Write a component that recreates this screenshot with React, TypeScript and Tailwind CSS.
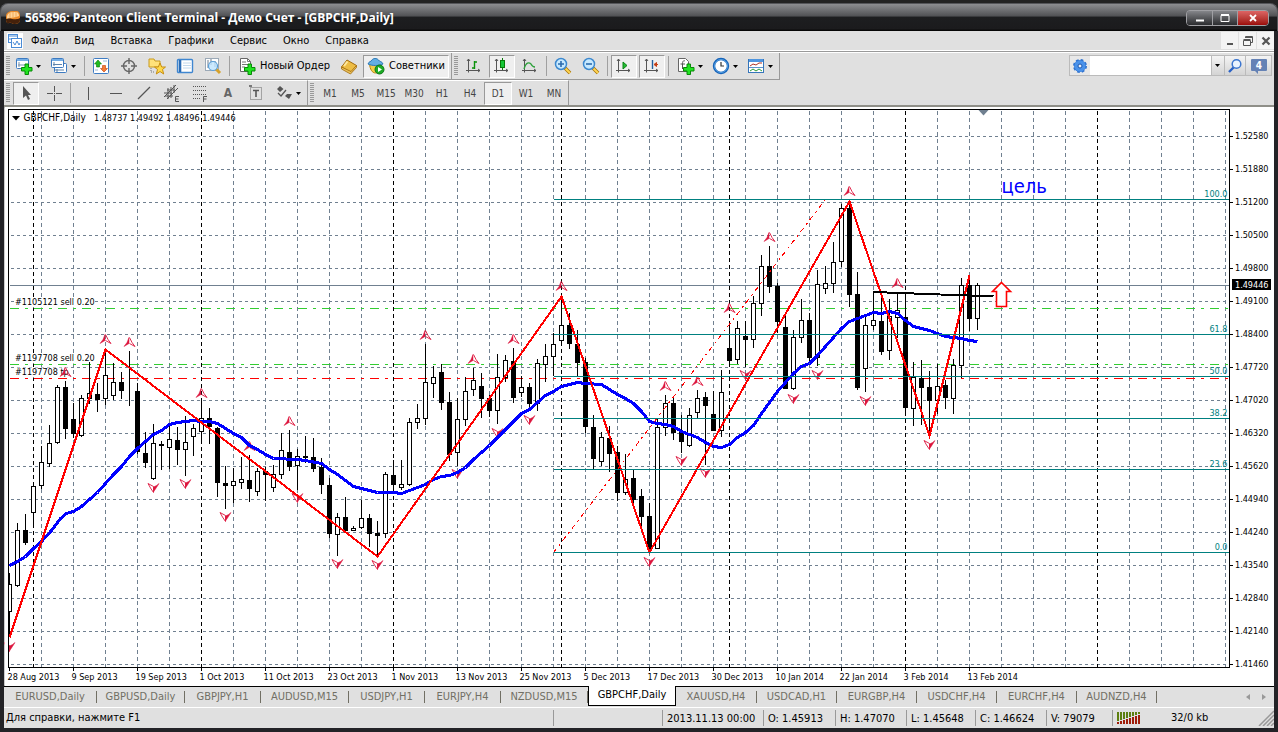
import React, { useState } from "react";

type Candle = [number, number, number, number, number];

// high, body top, body bottom, low, filled
const CANDLES: Candle[] = [
  [573, 584, 612, 636, 0], [523, 530, 586, 587, 0], [514, 530, 543, 545, 1],
  [484, 486, 513, 524, 0], [446, 462, 486, 489, 0], [425, 443, 464, 467, 0],
  [385, 387, 443, 444, 0], [381, 387, 429, 439, 1], [403, 419, 434, 438, 1],
  [395, 398, 436, 437, 0], [362, 393, 399, 404, 0], [383, 394, 400, 412, 1],
  [349, 375, 399, 405, 0], [363, 382, 396, 400, 0], [372, 382, 391, 399, 1],
  [351, 391, 392, 406, 1], [383, 391, 452, 454, 1], [432, 453, 463, 468, 1],
  [424, 443, 479, 480, 0], [441, 444, 446, 470, 1], [424, 439, 448, 469, 0],
  [427, 440, 450, 465, 1], [416, 442, 450, 476, 0], [424, 428, 437, 456, 0],
  [402, 418, 432, 443, 0], [408, 418, 427, 444, 1], [427, 428, 483, 497, 1],
  [466, 483, 486, 509, 1], [468, 481, 486, 503, 0], [457, 479, 483, 489, 0],
  [455, 480, 489, 502, 1], [468, 471, 492, 496, 0], [467, 471, 475, 501, 1],
  [465, 474, 488, 492, 0], [433, 450, 475, 479, 0], [430, 452, 467, 471, 1],
  [449, 456, 466, 490, 0], [436, 456, 458, 463, 1], [438, 457, 469, 472, 1],
  [458, 467, 485, 494, 1], [478, 485, 534, 538, 1], [513, 517, 535, 556, 0],
  [497, 517, 531, 531, 1], [526, 528, 531, 531, 0], [500, 518, 528, 529, 0],
  [514, 518, 534, 547, 1], [521, 533, 536, 555, 1], [472, 474, 534, 538, 0],
  [460, 475, 485, 489, 1], [460, 484, 488, 490, 0], [418, 422, 485, 486, 0],
  [404, 418, 423, 429, 0], [344, 382, 419, 425, 0], [366, 377, 384, 398, 0],
  [364, 372, 403, 410, 1], [392, 402, 455, 461, 1], [398, 419, 453, 466, 0],
  [377, 391, 420, 426, 0], [368, 380, 390, 396, 0], [373, 386, 399, 418, 1],
  [395, 398, 411, 417, 1], [354, 377, 411, 424, 0], [355, 360, 378, 382, 0],
  [348, 361, 398, 403, 1], [376, 387, 393, 397, 0], [383, 387, 404, 409, 1],
  [359, 363, 404, 411, 0], [344, 356, 365, 382, 0], [333, 344, 357, 376, 0],
  [298, 325, 341, 344, 0], [313, 325, 344, 349, 1], [330, 344, 363, 376, 1],
  [358, 362, 427, 433, 1], [415, 427, 459, 469, 1], [432, 437, 462, 466, 0],
  [426, 438, 454, 472, 1], [446, 452, 493, 501, 1], [454, 479, 493, 495, 0],
  [469, 478, 500, 504, 1], [489, 496, 517, 527, 1], [503, 516, 549, 553, 1],
  [419, 427, 549, 549, 0], [395, 403, 428, 436, 0], [397, 403, 433, 440, 1],
  [415, 431, 442, 453, 1], [408, 415, 446, 447, 0], [390, 398, 413, 418, 0],
  [392, 397, 406, 465, 1], [391, 414, 431, 431, 1], [370, 392, 431, 437, 0],
  [325, 348, 361, 364, 1], [321, 328, 360, 364, 0], [321, 336, 340, 367, 1],
  [296, 303, 340, 348, 0], [255, 266, 304, 316, 0], [246, 266, 287, 293, 1],
  [283, 286, 322, 333, 1], [315, 327, 389, 389, 1], [330, 337, 389, 390, 0],
  [299, 320, 338, 343, 0], [313, 320, 358, 362, 1], [270, 284, 358, 366, 0],
  [266, 283, 289, 294, 0], [242, 262, 284, 293, 0], [204, 208, 262, 267, 0],
  [203, 208, 295, 307, 1], [272, 294, 388, 390, 1], [315, 325, 369, 392, 0],
  [291, 320, 326, 330, 0], [295, 321, 352, 355, 1], [299, 316, 351, 360, 0],
  [292, 310, 318, 338, 0], [295, 317, 408, 413, 1], [362, 377, 409, 426, 0],
  [360, 378, 388, 425, 1], [371, 387, 401, 435, 1], [364, 386, 401, 414, 0],
  [380, 385, 398, 409, 1], [359, 365, 399, 414, 0], [278, 285, 366, 378, 0],
  [280, 285, 319, 331, 1], [283, 285, 319, 330, 0],
];

const AVERAGE =
  "9,565 17,561 25,556 33,548 41,541 51,530 60,518 66,513 73,511 81,506 89,499 97,492 105,483 113,474 121,466 129,456 137,448 145,441 153,434 161,430 169,424 177,422 185,421 193,420 201,421 209,421 217,423 225,428 233,433 241,437 249,445 257,449 265,454 273,458 297,459 305,460 321,463 329,469 337,474 345,480 353,486 361,488 369,490 377,492 393,492 401,493 409,490 417,487 425,484 433,479 441,476 449,475 457,472 465,467 473,459 481,452 489,445 497,437 505,429 513,421 521,413 529,409 537,402 545,395 553,391 561,386 569,384 577,382 585,383 601,384 609,389 617,394 625,398 633,403 641,411 649,421 657,423 665,424 673,426 681,431 689,434 697,437 705,442 713,446 721,447 729,444 737,437 745,432 753,425 761,413 769,402 777,391 785,382 793,373 801,366 809,363 817,355 825,346 833,337 841,328 849,321 857,318 865,315 873,312 881,313 889,311 897,313 905,320 913,326 921,328 929,330 937,333 945,336 953,337 961,338 969,340 977,341";

const ZIGZAG = "9,637 105,349 377,556 561,296 649,552 849,201 929,435 969,275";

const FRACTALS_UP = [
  [65, 367], [105, 334], [129, 337], [201, 388], [249, 441], [289, 416],
  [425, 330], [473, 354], [513, 334], [561, 281], [665, 381], [697, 376],
  [729, 303], [769, 232], [849, 186], [897, 278],
];

const FRACTALS_DOWN = [
  [9, 642], [153, 483], [185, 479], [225, 512], [297, 493], [337, 559],
  [377, 560], [457, 469], [497, 428], [529, 415], [649, 557], [681, 456],
  [705, 468], [745, 370], [793, 394], [817, 370], [865, 396], [929, 440],
];

const PRICES = [
  "1.52580", "1.51880", "1.51200", "1.50500", "1.49800", "1.49100", "1.48400",
  "1.47720", "1.47020", "1.46320", "1.45620", "1.44940", "1.44240", "1.43540",
  "1.42840", "1.42140", "1.41460",
];

const DATES = [
  "28 Aug 2013", "9 Sep 2013", "19 Sep 2013", "1 Oct 2013", "11 Oct 2013",
  "23 Oct 2013", "1 Nov 2013", "13 Nov 2013", "25 Nov 2013", "5 Dec 2013",
  "17 Dec 2013", "30 Dec 2013", "10 Jan 2014", "22 Jan 2014", "3 Feb 2014",
  "13 Feb 2014",
];

const MONTHS = [33, 201, 393, 561, 729, 905, 1097];

const FIBO = [
  { y: 199, label: "100.0" },
  { y: 334, label: "61.8" },
  { y: 376, label: "50.0" },
  { y: 418, label: "38.2" },
  { y: 469, label: "23.6" },
  { y: 552, label: "0.0" },
];

const ORDERS = [
  { y: 308, label: "#1105121 sell 0.20", color: "#32cd32", box: 79 },
  { y: 364, label: "#1197708 sell 0.20", color: "#32cd32", box: 79 },
  { y: 378, label: "#1197708 tp", color: "#ff0000", box: 54 },
];

const Chart: React.FC = () => (
  <svg
    className="block h-full w-full font-['DejaVu_Sans_Condensed','Noto_Sans',sans-serif] text-[9px]"
    role="img"
    aria-label="GBPCHF,Daily"
  >
    <g transform="translate(-3.5 -106.5)">
      <g shapeRendering="crispEdges" fill="none">
        {Array.from({ length: 38 }, (_, i) => (
          <path key={i} d={`M${41 + i * 32} 110V667`} stroke="#708090" strokeDasharray="4 3" />
        ))}
        {PRICES.map((p, i) => (
          <path key={p} d={`M10 ${136 + i * 33}H1229`} stroke="#708090" strokeDasharray="3 3" />
        ))}
        {MONTHS.map((x) => (
          <path key={x} d={`M${x} 110V667`} stroke="#000" strokeDasharray="4 3" />
        ))}
        <path d="M9 285H1229" stroke="#708090" />
      </g>

      {ORDERS.map((o) => (
        <g key={o.y}>
          <rect x={15} y={o.y - 11} width={o.box} height={10} fill="#fff" />
          <path
            d={`M9 ${o.y}H1229`}
            stroke={o.color}
            strokeDasharray="9 6 3 6"
            shapeRendering="crispEdges"
          />
          <text x={14.500} y={o.y - 3.500}>{o.label}</text>
        </g>
      ))}

      <g stroke="#000" shapeRendering="crispEdges">
        {CANDLES.map(([high, top, bottom, low, filled], i) => {
          const x = 9 + i * 8;
          return (
            <g key={i}>
              <path d={`M${x} ${high - 0.5}V${Math.max(low, bottom) - 0.5}`} />
              <rect
                x={x - 2}
                y={top}
                width={4}
                height={Math.max(bottom - top - 1, 0)}
                fill={filled ? "#000" : "#fff"}
              />
            </g>
          );
        })}
      </g>

      <g stroke="#dc143c">
        {FRACTALS_UP.map(([x, y]) => (
          <g key={x} transform={`translate(${x} ${y})`}>
            <path d="M-.5 0L-2.500 5L-5.500 9L-.5 6Z" fill="#dc143c" strokeWidth=".5" />
            <path d="M0 0L2.500 5L5.500 9L0 6" fill="none" strokeWidth=".9" />
          </g>
        ))}
        {FRACTALS_DOWN.map(([x, y]) => (
          <g key={x} transform={`translate(${x} ${y})`}>
            <path d="M-5.500 0L0 3V9L-3 4.500Z" fill="none" strokeWidth=".9" />
            <path d="M5.500 0L3 4L0 8.500V3.500L3 2Z" fill="#dc143c" strokeWidth=".5" />
          </g>
        ))}
      </g>

      <g fill="none" shapeRendering="crispEdges">
        <polyline points={AVERAGE} stroke="#0000ff" strokeWidth="3" />
        <polyline points={ZIGZAG} stroke="#ff0000" strokeWidth="2" />
        <path d="M553 552L825 199" stroke="#ff0000" strokeDasharray="5 4 2 4" />
        {FIBO.map((f) => (
          <path key={f.y} d={`M553 ${f.y}H1229`} stroke="#008080" />
        ))}
        <path d="M873 291.500L993 296" stroke="#000" strokeWidth="2" />
      </g>
      <g fill="#008080" textAnchor="end">
        {FIBO.map((f) => (
          <text key={f.y} x={1227} y={f.y - 2.500}>{f.label}</text>
        ))}
      </g>

      <path
        d="M1001 282L1010 291H1006V306H996V291H992Z"
        fill="#fff"
        stroke="#ff0000"
        strokeWidth="1.600"
      />
      <text x={1001} y={192} fill="#0000ff" className="text-[20px]">цель</text>

      {/* axes */}
      <rect x={4} y={107} width={4} height={578} fill="#fff" />
      <g stroke="#000" fill="none" shapeRendering="crispEdges">
        <path d="M8 109H1229V667H8Z" />
        {PRICES.map((p, i) => (
          <path key={p} d={`M1229 ${136 + i * 33}h3`} />
        ))}
        {DATES.map((d, i) => (
          <path key={d} d={`M${9 + i * 64} 667v3`} />
        ))}
      </g>
      <path d="M978 109.500H988L983 115Z" fill="#708090" />
      {PRICES.map((p, i) => (
        <text key={p} x={1234.500} y={138.500 + i * 33}>{p}</text>
      ))}
      <rect x={1231.5} y={278.5} width={39} height={11} fill="#000" />
      <text x={1234.500} y={287.500} fill="#fff">1.49446</text>
      {DATES.map((d, i) => (
        <text key={d} x={7 + i * 64} y={679.500}>{d}</text>
      ))}
      <path d="M11.500 115.500H19.500L15.500 120Z" />
      <text x={23} y={120.500} className="text-[10px]">GBPCHF,Daily</text>
      <text x={93.500} y={120.500}>1.48737 1.49492 1.48496 1.49446</text>
    </g>
  </svg>
);

const Icon: React.FC<{ children: React.ReactNode }> = ({ children }) => (
  <svg width="18" height="18" viewBox="0 0 18 18" fill="none" className="shrink-0" aria-hidden="true">
    {children}
  </svg>
);

const Plus: React.FC = () => (
  <path d="M10 7H13.500V10.500H17V14H13.500V17.500H10V14H6.500V10.500H10Z" fill="#21e321" stroke="#078a07" />
);

const Axes: React.FC = () => (
  <path d="M3.500 2V15.500M1 13.500H15M2 4L3.500 2L5 4M13 12L15 13.500L13 15" stroke="#555" />
);

const NewChartIcon = () => (
  <Icon>
    <rect x="1.500" y="1.500" width="12" height="10" rx="1" fill="#fff" stroke="#3d7ac0" />
    <path d="M2 3H13" stroke="#75aee6" strokeWidth="2" />
    <path d="M4 5V10M3 8H11" stroke="#7891aa" />
    <Plus />
  </Icon>
);

const ProfilesIcon = () => (
  <Icon>
    <rect x="4.500" y="6.500" width="12" height="9" rx="1" fill="#fff" stroke="#3d7ac0" />
    <rect x="1.500" y="1.500" width="12" height="9" rx="1" fill="#fff" stroke="#3d7ac0" />
    <path d="M2 3H13" stroke="#75aee6" strokeWidth="2" />
    <path d="M4 5V9M3 7.500H12M5 13H14M7 12V15" stroke="#5f83aa" />
  </Icon>
);

const MarketWatchIcon = () => (
  <Icon>
    <rect x="1.500" y="1.500" width="15" height="15" rx="1" fill="#fff" stroke="#3f7dc4" />
    <path d="M6 3L9.500 7H7.500V10H4.500V7H2.500Z" fill="#20bc20" stroke="#087b08" strokeWidth=".6" />
    <path d="M12 15L8.500 11.500H10.500V8.500H13.500V11.500H15.500Z" fill="#f57b35" stroke="#bf3e08" strokeWidth=".6" />
    <path d="M11 4H15M3 13H6" stroke="#9bb9da" />
  </Icon>
);

const TargetIcon = () => (
  <Icon>
    <circle cx="9" cy="9" r="5.500" stroke="#666" strokeWidth="1.400" />
    <path d="M9 1V7M9 11V17M1 9H7M11 9H17" stroke="#666" strokeWidth="1.400" />
  </Icon>
);

const NavigatorIcon = () => (
  <Icon>
    <path d="M1 2H6L7 4H12V10H1Z" fill="#ffe27a" stroke="#c99a1d" />
    <path d="M3 11V15H6" stroke="#777" strokeDasharray="1 1" />
    <path d="M12 6L13.700 10H17.500L14.500 12.500L15.700 17L12 14.500L8.300 17L9.500 12.500L6.500 10H10.300Z" fill="#ffd94a" stroke="#c78e13" />
  </Icon>
);

const TerminalIcon = () => (
  <Icon>
    <rect x="1.500" y="2.500" width="15" height="13" rx="1" fill="#fff" stroke="#3f86d0" strokeWidth="1.400" />
    <path d="M4 3V15" stroke="#2b6cb5" strokeWidth="2.600" />
    <path d="M7 6H15M7 8.500H15M7 11H15" stroke="#c2d8ec" />
  </Icon>
);

const TesterIcon = () => (
  <Icon>
    <rect x="1.500" y="1.500" width="13" height="12" fill="#fff" stroke="#9ba9b7" />
    <path d="M4 3V11M7 2V8M11 4V10" stroke="#6c7d8e" />
    <path d="M12 12L16 16" stroke="#d7a22b" strokeWidth="3" />
    <circle cx="9" cy="9" r="4.500" fill="#bfe5ffcc" stroke="#5a9fd8" strokeWidth="1.200" />
  </Icon>
);

const OrderIcon = () => (
  <Icon>
    <path d="M2.500 1.500H9.500L12.500 4.500V14.500H2.500Z" fill="#fff" stroke="#666" />
    <path d="M4 5H8M4 7.500H10M4 10H7M9.500 1.500V4.500H12.500" stroke="#777" />
    <Plus />
  </Icon>
);

const BookIcon = () => (
  <Icon>
    <path d="M1.500 10L7 3L16.500 8.500L11 15.500Z" fill="#edbd45" stroke="#a36b0d" />
    <path d="M1.500 10V12L10.500 17L16.500 10.500V8.500L11 14.500Z" fill="#e8c25c" stroke="#a36b0d" strokeWidth=".8" />
    <path d="M4 9L7.500 4.500" stroke="#ffe79c" strokeWidth="2" />
  </Icon>
);

const AdvisorsIcon = () => (
  <Icon>
    <path d="M2.500 7H14C14 13 12 16 8.500 16S3 12 2.500 7Z" fill="#f4cd48" stroke="#b58513" />
    <path d="M1 7C2 4 4 5 5 3C6 1 10 1 11.500 3C12.500 5 15 4 16 7C12 9 5 9 1 7Z" fill="#63aee3" stroke="#2c78b5" />
    <circle cx="12.500" cy="12.500" r="4.500" fill="#1dab25" stroke="#0b7815" />
    <path d="M11 10L15 12.500L11 15Z" fill="#fff" />
  </Icon>
);

const BarsIcon = () => (
  <Icon><Axes /><path d="M9.500 4V12M7 11H9.500M9.500 5H12" stroke="#0a910a" strokeWidth="1.400" /></Icon>
);

const CandlesIcon = () => (
  <Icon><Axes /><path d="M9.500 1V13" stroke="#087b08" /><rect x="7.500" y="3.500" width="4" height="7" fill="#16c736" stroke="#087b08" /></Icon>
);

const LineIcon = () => (
  <Icon><Axes /><path d="M3 12C5 5 8 5 10 7C11 9 13 10 14 10" stroke="#2ca13a" strokeWidth="1.300" /></Icon>
);

const ZoomIcon: React.FC<{ plus?: boolean }> = ({ plus }) => (
  <Icon>
    <path d="M11 11L16 16" stroke="#a77409" strokeWidth="3.600" />
    <path d="M11.500 11.500L16 16" stroke="#ffd552" strokeWidth="2" />
    <circle cx="7" cy="7" r="5.500" fill="#c7e9ff" stroke="#3d89cf" strokeWidth="1.500" />
    <path d={plus ? "M4 7H10M7 4V10" : "M4 7H10"} stroke="#2d6cae" strokeWidth="1.600" />
  </Icon>
);

const ScrollIcon = () => (
  <Icon><Axes /><path d="M8 5L12 8.500L8 12Z" fill="#22bd33" stroke="#0a8414" /></Icon>
);

const ShiftIcon = () => (
  <Icon><Axes /><path d="M9.500 3V12" stroke="#205f9e" strokeWidth="1.400" /><path d="M15 7.500H12M13.500 5.500L11 7.500L13.500 9.500Z" fill="#c53d15" stroke="#c53d15" /></Icon>
);

const IndicatorsIcon = () => (
  <Icon>
    <path d="M1.500 1.500H8.500L11.500 4.500V14.500H1.500Z" fill="#fff" stroke="#666" />
    <path d="M8 4C6 3 5.500 5 5.500 7V12M3.500 7H8" stroke="#555" />
    <Plus />
  </Icon>
);

const ClockIcon = () => (
  <Icon>
    <circle cx="9" cy="9" r="7" fill="#fff" stroke="#1764ba" strokeWidth="2.400" />
    <circle cx="9" cy="9" r="6.500" stroke="#64adea" strokeWidth=".8" />
    <path d="M9 5V9H12" stroke="#333" strokeWidth="1.200" />
  </Icon>
);

const TemplatesIcon = () => (
  <Icon>
    <rect x="1.500" y="2.500" width="15" height="13" fill="#fff" stroke="#3575ba" />
    <path d="M2 3.500H16" stroke="#4e95df" strokeWidth="3" />
    <path d="M3 9L6 7L9 8L12 6H15" stroke="#ad3426" />
    <path d="M2 10.500H16" stroke="#5c94cb" />
    <path d="M3 14L6 12L9 14L12 12L15 14" stroke="#2b9b3a" />
  </Icon>
);

const glyphs: { label: string; icon: React.ReactNode }[] = [
  { label: "Вертикальная линия", icon: <path d="M9.500 3V16" stroke="#555" /> },
  { label: "Горизонтальная линия", icon: <path d="M3 9.500H15" stroke="#555" /> },
  { label: "Трендовая линия", icon: <path d="M3 15L15 3" stroke="#555" strokeWidth="1.300" /> },
  {
    label: "Канал",
    icon: (
      <>
        <path d="M1 13L13 1M4 15L15 4M1 9L9 9M4 6H12M2 12H10M5 4V15M8 3V14M11 1V9" stroke="#555" />
        <path d="M16 12.500H12.500V17.500H16M12.500 15H15.500" stroke="#555" />
      </>
    ),
  },
  {
    label: "Фибоначчи",
    icon: (
      <>
        <path d="M2 2.500H15M2 6.500H15M2 10.500H15M2 14.500H10" stroke="#555" strokeDasharray="1 1" />
        <path d="M16 12.500H12.500V18M12.500 15H15.500" stroke="#555" />
      </>
    ),
  },
];

const DropArrow = () => (
  <svg width="5" height="3" viewBox="0 0 5 3" className="ml-[3px] shrink-0" aria-hidden="true">
    <path d="M0 0H5L2.500 3Z" />
  </svg>
);

interface ToolProps {
  label: string;
  drop?: boolean;
  pressed?: boolean;
  children: React.ReactNode;
}

const Tool: React.FC<ToolProps> = ({ label, drop, pressed, children }) => {
  if (drop) {
    return (
      <button type="button" aria-label={label} className="flex h-6 w-[35px] items-center pl-[3px]">
        {children}
        <DropArrow />
      </button>
    );
  }
  return (
    <button
      type="button"
      aria-label={label}
      aria-pressed={pressed}
      className="flex h-6 w-7 items-center justify-center"
    >
      <span
        className={
          pressed
            ? "flex h-[23px] w-[26px] items-center justify-center border border-[#999] border-r-white border-b-white bg-[#efefef]"
            : "flex items-center justify-center"
        }
      >
        {children}
      </span>
    </button>
  );
};

const Grip = () => (
  <span className="mx-0.5 h-5 w-1 bg-[repeating-linear-gradient(#999_0_1px,#e0e0e0_1px_2px)]" />
);

const Separator = () => <span className="mx-0.5 h-5 w-px bg-[#a0a0a0]" />;

const TIMEFRAMES = ["M1", "M5", "M15", "M30", "H1", "H4", "D1", "W1", "MN"];

const TABS = [
  { name: "EURUSD,Daily", width: "w-[93px]" },
  { name: "GBPUSD,Daily", width: "w-22" },
  { name: "GBPJPY,H1", width: "w-19" },
  { name: "AUDUSD,M15", width: "w-22" },
  { name: "USDJPY,H1", width: "w-19" },
  { name: "EURJPY,H4", width: "w-19" },
  { name: "NZDUSD,M15", width: "w-[87px]" },
  { name: "GBPCHF,Daily", width: "w-22" },
  { name: "XAUUSD,H4", width: "w-[81px]" },
  { name: "USDCAD,H1", width: "w-20" },
  { name: "EURGBP,H4", width: "w-20" },
  { name: "USDCHF,H4", width: "w-20" },
  { name: "EURCHF,H4", width: "w-20" },
  { name: "AUDNZD,H4", width: "w-20" },
];

const STATUS = [
  { text: "", width: "w-[109px]" },
  { text: "2013.11.13 00:00", width: "w-[101px]" },
  { text: "O: 1.45913", width: "w-[72px]" },
  { text: "H: 1.47070", width: "w-[71px]" },
  { text: "L: 1.45648", width: "w-[69px]" },
  { text: "C: 1.46624", width: "w-[71px]" },
  { text: "V: 79079", width: "w-[66px]" },
];

const MENU = ["Файл", "Вид", "Вставка", "Графики", "Сервис", "Окно", "Справка"];

const App: React.FC = () => {
  const [timeframe, setTimeframe] = useState("D1");
  const [tab, setTab] = useState("GBPCHF,Daily");
  const [query, setQuery] = useState("");

  return (
    <div className="flex h-screen w-full flex-col overflow-hidden bg-[#232323] pt-[3px] font-['DejaVu_Sans_Condensed','Noto_Sans',sans-serif] text-[11px] text-black">
      {/* title bar */}
      <header className="flex h-7 shrink-0 items-center rounded-t-lg border border-b-0 border-[#55565a] bg-[linear-gradient(#8d8e91_0,#505154_45%,#1d1e20_48%,#1b1b1d_92%,#000_100%)] pr-2 pl-1">
        <svg width="16" height="16" viewBox="0 0 16 16" className="mr-1" aria-hidden="true">
          <path d="M1 6C1 3 4 1 8 1H11C14 1 15 3 15 6V10C15 13 12 14 9 14C7 14 7 12 4 13C1 14 1 10 1 6Z" fill="#e98a2b" />
          <path d="M2 6C3 3 5 2 8 2H11C13 2 14 4 14 6C10 8 7 7 2 9Z" fill="#ffd39a" />
          <path d="M5 3V8M8 2V8M11 2V7" stroke="#f3ab58" />
          <path d="M1 9C4 7 11 11 15 8V10C15 13 12 14 9 14C7 14 7 12 4 13C2 14 1 12 1 9Z" fill="#45210b" />
        </svg>
        <h1 className="font-['Open_Sans',sans-serif] text-[12px] font-bold text-white">
          565896: Panteon Client Terminal - Демо Счет - [GBPCHF,Daily]
        </h1>
        <div className="ml-auto flex h-4 overflow-hidden rounded-sm border border-[#a0a0a4]">
          <button type="button" aria-label="Свернуть" className="flex w-[25px] justify-center bg-linear-to-b from-[#85868a] to-[#2c2d30]">
            <svg width="14" height="14" aria-hidden="true"><path d="M3 9.500H11" stroke="#fff" strokeWidth="2" /></svg>
          </button>
          <button type="button" aria-label="Развернуть" className="flex w-[26px] justify-center border-x border-[#a0a0a4] bg-linear-to-b from-[#85868a] to-[#2c2d30]">
            <svg width="14" height="14" aria-hidden="true"><path d="M3 4.500H11V10.500H3ZM3 3.500H11" stroke="#fff" fill="none" /></svg>
          </button>
          <button type="button" aria-label="Закрыть" className="flex w-[30px] justify-center bg-linear-to-b from-[#dd6464] to-[#9c0808]">
            <svg width="14" height="14" aria-hidden="true"><path d="M4 4L10 10M10 4L4 10" stroke="#fff" strokeWidth="1.800" /></svg>
          </button>
        </div>
      </header>

      <div className="flex min-h-0 flex-1 flex-col border-x-4 border-b-4 border-[#232327] bg-[#e0e0e0]">
        {/* menu */}
        <nav className="flex h-[19px] shrink-0 items-center">
          <svg width="16" height="16" viewBox="0 0 16 16" className="ml-[3px] bg-white" aria-hidden="true">
            <rect x="1.500" y="1.500" width="9" height="8" fill="#fff" stroke="#4a8bd6" />
            <path d="M2 3H10" stroke="#4a8bd6" />
            <rect x="4.500" y="5.500" width="10" height="9" fill="#fff" stroke="#4a8bd6" />
            <path d="M6 9L8 12L10 8L12 12L13 10M3 5V7" stroke="#4a8bd6" fill="none" />
          </svg>
          {MENU.map((item) => (
            <button key={item} type="button" className="px-2 pt-0.5">
              {item}
            </button>
          ))}
          <div className="ml-auto flex h-[17px] gap-px text-[#555]">
            <button type="button" aria-label="Свернуть окно" className="flex w-[17px] items-center justify-center bg-[#f4f4f4]">
              <svg width="12" height="12" aria-hidden="true"><path d="M3 9H9" stroke="#555" strokeWidth="2" /></svg>
            </button>
            <button type="button" aria-label="Восстановить окно" className="flex w-[17px] items-center justify-center bg-[#f4f4f4]">
              <svg width="12" height="12" fill="none" aria-hidden="true">
                <path d="M1.500 5.500H8.500V10.500H1.500ZM1.500 4.500H8.500M3.500 3V1.500H10.500V7.500H9M3.500 2.500H10.500" stroke="#555" />
              </svg>
            </button>
            <button type="button" aria-label="Закрыть окно" className="flex w-[17px] items-center justify-center bg-[#f4f4f4]">
              <svg width="12" height="12" aria-hidden="true"><path d="M2.500 2.500L9.500 9.500M9.500 2.500L2.500 9.500" stroke="#555" strokeWidth="2.200" /></svg>
            </button>
          </div>
        </nav>
        <div className="h-[3px] shrink-0 border-y border-white bg-[#999]" />

        {/* standard toolbar */}
        <div className="flex h-[27px] shrink-0 justify-between">
          <div className="flex items-center border-r border-b border-[#999]">
            <Grip />
            <Tool label="Новый график" drop><NewChartIcon /></Tool>
            <Tool label="Профили" drop><ProfilesIcon /></Tool>
            <Separator />
            <Tool label="Обзор рынка"><MarketWatchIcon /></Tool>
            <Tool label="Окно данных"><TargetIcon /></Tool>
            <Tool label="Навигатор"><NavigatorIcon /></Tool>
            <Tool label="Терминал"><TerminalIcon /></Tool>
            <Tool label="Тестер стратегий"><TesterIcon /></Tool>
            <Separator />
            <button type="button" className="flex h-6 w-[103px] items-center gap-1 pl-1.5 whitespace-nowrap">
              <OrderIcon />
              Новый Ордер
            </button>
            <Tool label="Редактор"><BookIcon /></Tool>
            <button
              type="button"
              aria-pressed
              className="flex h-[23px] w-[86px] items-center gap-1 border border-[#999] border-r-white border-b-white bg-[#efefef] pl-[3px] whitespace-nowrap"
            >
              <AdvisorsIcon />
              Советники
            </button>
            <span className="ml-0.5 h-full w-px bg-[#999]" />
            <Grip />
            <Tool label="Бары"><BarsIcon /></Tool>
            <Tool label="Свечи" pressed><CandlesIcon /></Tool>
            <Tool label="Линия"><LineIcon /></Tool>
            <Separator />
            <Tool label="Увеличить"><ZoomIcon plus /></Tool>
            <Tool label="Уменьшить"><ZoomIcon /></Tool>
            <Separator />
            <Tool label="Автопрокрутка" pressed><ScrollIcon /></Tool>
            <Tool label="Сдвиг графика" pressed><ShiftIcon /></Tool>
            <Separator />
            <div className="flex pl-[3px]">
              <Tool label="Индикаторы" drop><IndicatorsIcon /></Tool>
              <Tool label="Периоды" drop><ClockIcon /></Tool>
              <Tool label="Шаблоны" drop><TemplatesIcon /></Tool>
            </div>
          </div>

          <form
            className="mt-0.5 mr-0.5 flex h-[21px] border border-[#bbb] bg-[#e8e8e8]"
            onSubmit={(e) => e.preventDefault()}
          >
            <button type="button" aria-label="Настройки поиска" className="flex w-5 items-center justify-center">
              <svg width="16" height="16" viewBox="0 0 16 16" aria-hidden="true">
                <circle cx="8" cy="8" r="6" fill="#3c82dc" stroke="#2f72cf" strokeWidth="2" strokeDasharray="2.700 2" />
                <circle cx="8" cy="8" r="5.500" fill="#4a92ea" />
                <circle cx="8" cy="8" r="2" fill="#e8f0fa" stroke="#1b56b0" />
              </svg>
            </button>
            <input
              type="text"
              aria-label="Поиск"
              value={query}
              onChange={(e) => setQuery(e.target.value)}
              className="w-[121px] bg-white px-1 outline-none"
            />
            <button type="button" aria-label="История поиска" className="flex w-3.5 items-center border-x border-[#bbb] bg-linear-to-b from-[#f4f4f4] to-[#d4d4d4]">
              <DropArrow />
            </button>
            <button type="submit" aria-label="Найти" className="flex w-5 items-center justify-center bg-linear-to-b from-[#f4f4f4] to-[#d4d4d4]">
              <svg width="16" height="16" viewBox="0 0 16 16" aria-hidden="true">
                <path d="M7 9L2 14" stroke="#2a62c6" strokeWidth="2.400" />
                <circle cx="9.500" cy="6" r="4.300" fill="#eaf3ff" stroke="#3c76cf" strokeWidth="1.500" />
              </svg>
            </button>
            <button type="button" aria-label="Сообщения: 4" className="flex w-[26px] items-center justify-center border-l border-[#bbb] bg-linear-to-b from-[#f4f4f4] to-[#d4d4d4]">
              <svg width="16" height="16" viewBox="0 0 16 16" aria-hidden="true">
                <path d="M1 1H15Q16 1 16 2V12Q16 13 15 13H7V16L4 13H1Q0 13 0 12V2Q0 1 1 1Z" fill="#6582b5" />
                <text x="8" y="11" textAnchor="middle" fill="#fff" className="text-[10px] font-bold">4</text>
              </svg>
            </button>
          </form>
        </div>

        {/* drawing tools and periods */}
        <div className="flex h-[27px] shrink-0 border-b-2 border-[#8f8f88]">
          <div className="flex items-center border-t border-r border-t-white border-r-[#999]">
            <Grip />
            <Tool label="Курсор" pressed>
              <Icon><path d="M6 2V14L9 11.500L11 16L13 15L11 11H14Z" fill="#555" /></Icon>
            </Tool>
            <Tool label="Перекрестие">
              <Icon><path d="M9.500 2V8M9.500 11V17M2 9.500H8M11 9.500H17M9 9.500H10" stroke="#555" /></Icon>
            </Tool>
            <Separator />
            <div className="flex pl-px">
              {glyphs.map((g) => (
                <Tool key={g.label} label={g.label}>
                  <Icon>{g.icon}</Icon>
                </Tool>
              ))}
              <Tool label="Текст">
                <span className="text-[12px] font-bold text-[#666]">A</span>
              </Tool>
              <Tool label="Метка">
                <Icon>
                  <rect x="3.500" y="3.500" width="11" height="12" stroke="#666" strokeDasharray="1 1" />
                  <path d="M6 6.500H12M9 6V13M2 2H5" stroke="#555" strokeWidth="1.600" />
                </Icon>
              </Tool>
            </div>
            <div className="flex pl-0.5">
              <Tool label="Стрелки" drop>
                <Icon>
                  <path d="M5 2L8.500 5L5 8L2 5ZM12 10H17L14 15L10 12Z" fill="#555" />
                  <path d="M3 9L6 12L11 6" stroke="#555" strokeWidth="1.300" />
                </Icon>
              </Tool>
            </div>
          </div>
          <div className="flex items-center border-t border-r border-t-white border-r-[#999] text-[10px] text-[#444]">
            <Grip />
            {TIMEFRAMES.map((t) => (
              <button
                key={t}
                type="button"
                aria-pressed={t === timeframe}
                onClick={() => setTimeframe(t)}
                className={
                  t === timeframe
                    ? "h-[23px] w-7 border border-[#999] border-r-white border-b-white bg-[#efefef]"
                    : "h-[23px] w-7"
                }
              >
                {t}
              </button>
            ))}
          </div>
        </div>

        <main className="min-h-0 flex-1 border-l border-[#999] bg-white">
          <div className="-ml-px h-full">
            <Chart />
          </div>
        </main>

        {/* chart tabs */}
        <div className="flex h-[21px] shrink-0 border-t border-black bg-[#e0e0e0]">
          {TABS.map((t) => (
            <button
              key={t.name}
              type="button"
              onClick={() => setTab(t.name)}
              className={`${t.width} flex items-center justify-center ${
                t.name === tab
                  ? "-mt-px h-5 border border-t-0 border-black bg-white"
                  : "h-5 text-[#716f64]"
              }`}
            >
              <span className={t.name === tab ? "" : "w-full border-r border-[#716f64] leading-3"}>
                {t.name}
              </span>
            </button>
          ))}
          <div className="ml-auto flex items-center gap-3 pr-2">
            <button type="button" aria-label="Назад">
              <svg width="4" height="6" className="block" aria-hidden="true"><path d="M4 0V6L0 3Z" fill="#999" /></svg>
            </button>
            <button type="button" aria-label="Вперед">
              <svg width="4" height="6" className="block" aria-hidden="true"><path d="M0 0V6L4 3Z" fill="#999" /></svg>
            </button>
          </div>
        </div>

        {/* status bar */}
        <footer className="flex h-[21px] shrink-0 items-center border-t border-white leading-[18px]">
          <span className="flex-1 pl-0.5">Для справки, нажмите F1</span>
          {STATUS.map((s) => (
            <span key={s.width + s.text} className={`${s.width} h-4 border-l border-[#999] pl-1 whitespace-nowrap`}>
              {s.text}
            </span>
          ))}
          <span className="flex h-4 w-[162px] items-center border-l border-[#999] pl-1">
            <svg width="24" height="12" shapeRendering="crispEdges" aria-hidden="true">
              {Array.from({ length: 8 }, (_, i) => (
                <g key={i}>
                  <rect x={i * 3} y={0} width={2} height={9 - i} fill="#5d7f10" />
                  <rect x={i * 3} y={10 - i} width={2} height={2 + i} fill="#a01c08" />
                </g>
              ))}
            </svg>
            <span className="ml-[30px]">32/0 kb</span>
            <svg width="16" height="16" className="ml-auto" aria-hidden="true">
              <path d="M1 16L16 1M5 16L16 5M9 16L16 9M13 16L16 13" stroke="#999" strokeWidth="1.500" />
            </svg>
          </span>
        </footer>
      </div>
    </div>
  );
};

export default App;
